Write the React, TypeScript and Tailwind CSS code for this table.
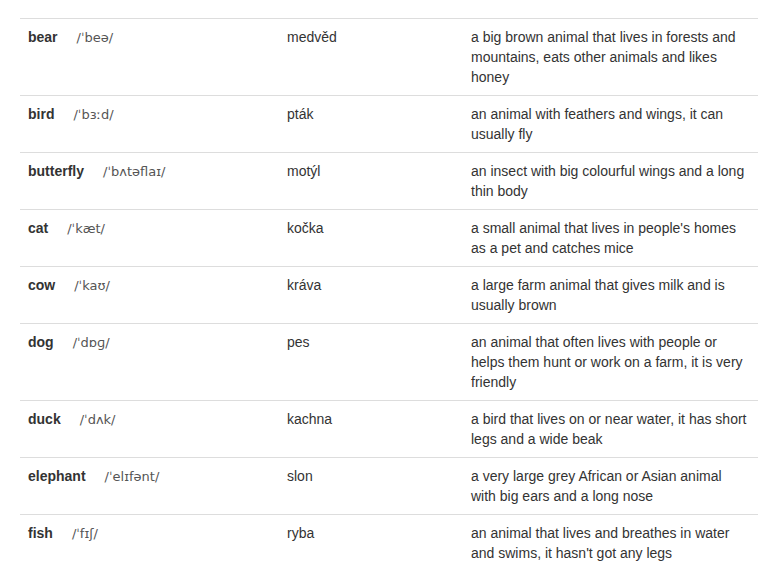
import React from 'react';

interface Word {
    en: string;
    ipa: string;
    cz: string;
    def: string;
}

const words: Word[] = [
    { en: 'bear', ipa: "/ˈbeə/", cz: 'medvěd', def: 'a big brown animal that lives in forests and mountains, eats other animals and likes honey' },
    { en: 'bird', ipa: "/ˈbɜːd/", cz: 'pták', def: 'an animal with feathers and wings, it can usually fly' },
    { en: 'butterfly', ipa: "/ˈbʌtəflaɪ/", cz: 'motýl', def: 'an insect with big colourful wings and a long thin body' },
    { en: 'cat', ipa: "/ˈkæt/", cz: 'kočka', def: "a small animal that lives in people's homes as a pet and catches mice" },
    { en: 'cow', ipa: "/ˈkaʊ/", cz: 'kráva', def: 'a large farm animal that gives milk and is usually brown' },
    { en: 'dog', ipa: "/ˈdɒɡ/", cz: 'pes', def: 'an animal that often lives with people or helps them hunt or work on a farm, it is very friendly' },
    { en: 'duck', ipa: "/ˈdʌk/", cz: 'kachna', def: 'a bird that lives on or near water, it has short legs and a wide beak' },
    { en: 'elephant', ipa: "/ˈelɪfənt/", cz: 'slon', def: 'a very large grey African or Asian animal with big ears and a long nose' },
    { en: 'fish', ipa: "/ˈfɪʃ/", cz: 'ryba', def: "an animal that lives and breathes in water and swims, it hasn't got any legs" },
];

export default function App() {
    return (
        <div className="bg-white min-h-[570px] px-[20px] pt-[18px] font-['Liberation_Sans','DejaVu_Sans',sans-serif] text-[14px] leading-[20px] text-[#333]">
            <table className="w-[738px] border-collapse table-fixed">
                <colgroup>
                    <col className="w-[259px]" />
                    <col className="w-[184px]" />
                    <col className="w-[295px]" />
                </colgroup>
                <tbody>
                    {words.map((w) => (
                        <tr key={w.en} className="border-t border-[#ddd] align-top">
                            <td className="p-[8px]">
                                <span className="font-bold">{w.en}</span>
                                <span className="ml-[19px] font-['DejaVu_Sans',sans-serif] text-[13px] text-[#555]">{w.ipa}</span>
                            </td>
                            <td className="p-[8px]">{w.cz}</td>
                            <td className="p-[8px]">{w.def}</td>
                        </tr>
                    ))}
                </tbody>
            </table>
        </div>
    );
}
